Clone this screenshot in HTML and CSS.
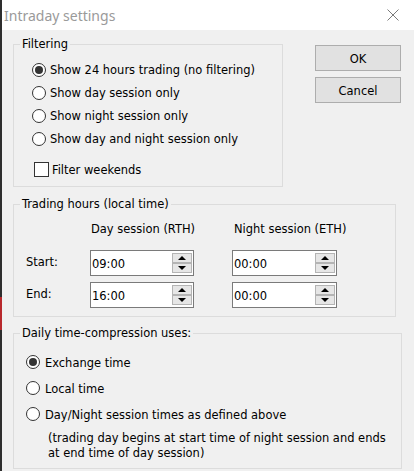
FILE: index.html
```html
<!DOCTYPE html>
<html>
<head>
<meta charset="utf-8">
<title>Intraday settings</title>
<link rel="stylesheet" href="styles.css">
</head>
<body>
<div class="screen">
  <div class="edge"></div>
  <div class="window">
    <div class="titlebar">
      <span class="title">Intraday settings</span>
      <svg class="close" width="12" height="12" viewBox="0 0 12 12"><path d="M0.5 0.5 L11.5 11.5 M11.5 0.5 L0.5 11.5" stroke="#7a7a7a" stroke-width="1" fill="none"/></svg>
    </div>
    <div class="content">
      <div class="top">
        <fieldset class="group filtering">
          <legend>Filtering</legend>
          <div class="list">
            <div class="opt"><span class="radio on"></span>Show 24 hours trading (no filtering)</div>
            <div class="opt"><span class="radio"></span>Show day session only</div>
            <div class="opt"><span class="radio"></span>Show night session only</div>
            <div class="opt"><span class="radio"></span>Show day and night session only</div>
          </div>
          <div class="opt check"><span class="box"></span>Filter weekends</div>
        </fieldset>
        <div class="buttons">
          <button class="btn">OK</button>
          <button class="btn">Cancel</button>
        </div>
      </div>

      <fieldset class="group hours">
        <legend>Trading hours (local time)</legend>
        <div class="grid">
          <div></div>
          <div class="head">Day session (RTH)</div>
          <div class="head night">Night session (ETH)</div>

          <div class="lbl">Start:</div>
          <div class="field"><span>09:00</span><span class="spinner"><span class="sb"><i class="up"></i></span><span class="sb"><i class="down"></i></span></span></div>
          <div class="field"><span>00:00</span><span class="spinner"><span class="sb"><i class="up"></i></span><span class="sb"><i class="down"></i></span></span></div>

          <div class="lbl">End:</div>
          <div class="field"><span>16:00</span><span class="spinner"><span class="sb"><i class="up"></i></span><span class="sb"><i class="down"></i></span></span></div>
          <div class="field"><span>00:00</span><span class="spinner"><span class="sb"><i class="up"></i></span><span class="sb"><i class="down"></i></span></span></div>
        </div>
      </fieldset>

      <fieldset class="group daily">
        <legend>Daily time-compression uses:</legend>
        <div class="list">
          <div class="opt"><span class="radio on"></span>Exchange time</div>
          <div class="opt"><span class="radio"></span>Local time</div>
          <div class="opt"><span class="radio"></span>Day/Night session times as defined above</div>
          <p class="note">(trading day begins at start time of night session and ends<br>at end time of day session)</p>
        </div>
      </fieldset>
    </div>
  </div>
</div>
</body>
</html>
```
FILE: styles.css
```css
* { box-sizing: border-box; }
html, body { margin: 0; padding: 0; }
body {
  width: 414px;
  height: 471px;
  overflow: hidden;
  background: #f0f0f0;
  font-family: "DejaVu Sans Condensed", "Liberation Sans", sans-serif;
  font-size: 12.75px;
  color: #000;
}
.screen { display: flex; height: 471px; }
.edge {
  width: 2px;
  flex: none;
  background: linear-gradient(to bottom, #2e2e2e 0, #2e2e2e 297px, #b8282c 297px, #b8282c 330px, #2e2e2e 330px);
}
.window { flex: 1; display: flex; flex-direction: column; background: #f0f0f0; }
.titlebar {
  height: 30px;
  flex: none;
  background: #fff;
  display: flex;
  align-items: center;
  justify-content: space-between;
  padding: 0 15px 0 2px;
}
.title { font-family: "Noto Sans", sans-serif; font-size: 14px; color: #9a9a9a; }
.close { display: block; }

.content { padding: 7px 0 0 11px; }
.top { display: flex; align-items: flex-start; gap: 32px; }

.group { margin: 0; padding: 0; border: 1px solid #dcdcdc; min-width: 0; }
.group legend { margin-left: 6px; padding: 0 2px; line-height: 14px; height: 14px; }

.opt { display: flex; align-items: center; height: 23px; white-space: nowrap; }
.radio {
  width: 14px; height: 14px; flex: none;
  border: 1px solid #333;
  border-radius: 50%;
  background: #fff;
  margin-right: 4px;
  display: flex; align-items: center; justify-content: center;
}
.radio.on::after { content: ""; width: 8px; height: 8px; border-radius: 50%; background: #333; }
.box { width: 15px; height: 15px; flex: none; border: 1px solid #333; background: #fff; margin-right: 3px; }

.filtering { width: 270px; height: 150px; }
.filtering .list { padding: 7px 0 0 18px; }
.filtering .check { margin-top: 8px; padding-left: 20px; }

.buttons { display: flex; flex-direction: column; gap: 6px; margin-top: 8px; }
.btn {
  width: 86px; height: 26px; padding: 0;
  background: #e1e1e1;
  border: 1px solid #adadad;
  font: inherit; color: #000;
}

.hours { width: 383px; height: 120px; margin-top: 10px; }
.grid {
  display: grid;
  grid-template-columns: 64px 142px 105px;
  column-gap: 0;
  row-gap: 6px;
  padding: 10px 0 0 12px;
}
.head { line-height: 16px; height: 16px; margin-bottom: 7px; padding-left: 1px; white-space: nowrap; }
.head.night { padding-left: 2px; }
.lbl { align-self: center; padding-bottom: 3px; }
.field {
  width: 104px;
  height: 26px;
  border: 1px solid #7a7a7a;
  background: #fff;
  display: flex;
  align-items: center;
  justify-content: space-between;
  padding: 0 1px 0 1px;
}
.grid > .field:nth-child(3n) { width: 105px; }
.spinner { display: flex; flex-direction: column; width: 20px; height: 20px; }
.sb {
  height: 10px;
  background: #e6e6e6;
  border: 1px solid #b4b4b4;
  display: flex; align-items: center; justify-content: center;
}
.up { width: 0; height: 0; border-left: 4px solid transparent; border-right: 4px solid transparent; border-bottom: 4px solid #000; }
.down { width: 0; height: 0; border-left: 4px solid transparent; border-right: 4px solid transparent; border-top: 4px solid #000; }

.daily { width: 389px; height: 143px; margin-top: 9px; }
.daily .list { padding: 9px 0 0 12px; }
.daily .opt { height: 26px; }
.daily .radio { margin-right: 5px; }
.note { margin: 3px 0 0 22px; line-height: 15px; white-space: nowrap; }
```
